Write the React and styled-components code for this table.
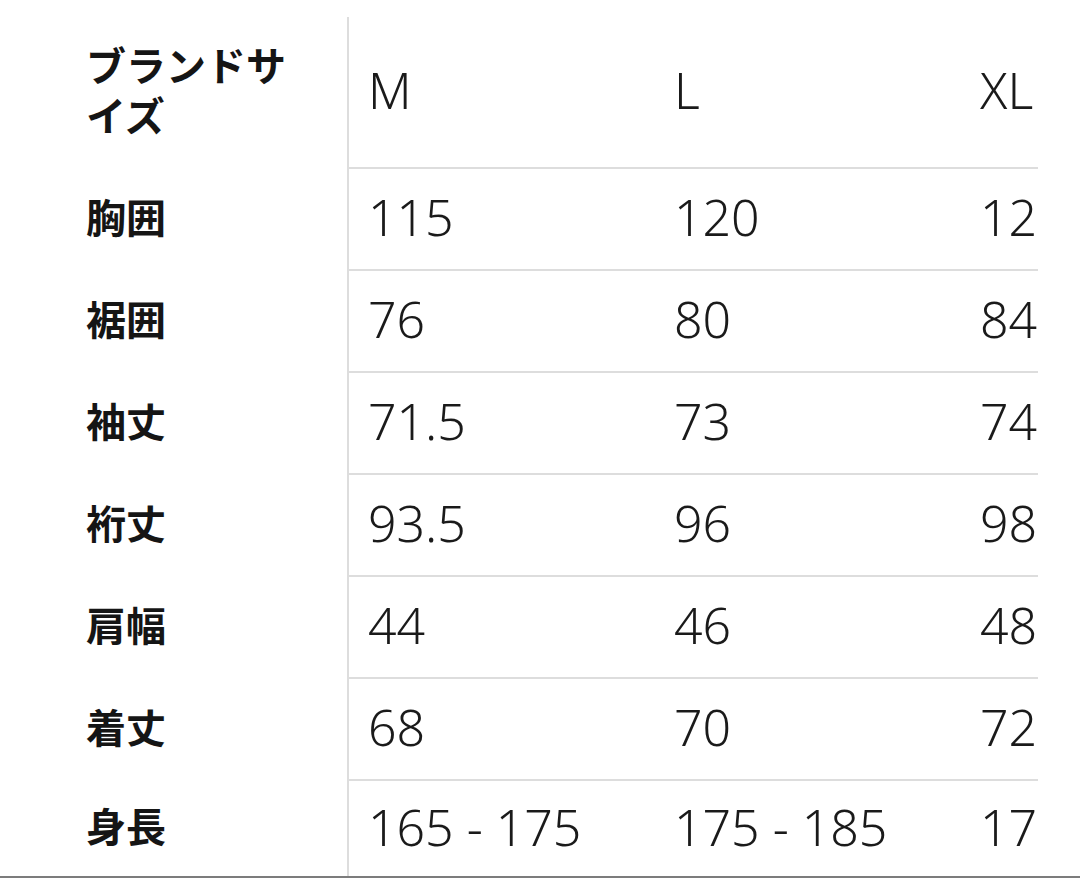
import React from 'react';
import styled, { createGlobalStyle } from 'styled-components';

const sizes = ['M', 'L', 'XL'];

const rows = [
  { label: '胸囲', values: ['115', '120', '125'] },
  { label: '裾囲', values: ['76', '80', '84'] },
  { label: '袖丈', values: ['71.5', '73', '74.5'] },
  { label: '裄丈', values: ['93.5', '96', '98.5'] },
  { label: '肩幅', values: ['44', '46', '48'] },
  { label: '着丈', values: ['68', '70', '72'] },
  { label: '身長', values: ['165 - 175', '175 - 185', '175 - 185'] },
];

function App() {
  return (
    <>
      <GlobalStyle />
      <Page>
        <Table>
          <Row head>
            <LabelCell>ブランドサイズ</LabelCell>
            {sizes.map((s) => (
              <ValueCell key={s}>{s}</ValueCell>
            ))}
          </Row>
          {rows.map((row, i) => (
            <Row key={row.label} last={i === rows.length - 1}>
              <LabelCell>{row.label}</LabelCell>
              {row.values.map((v, j) => (
                <ValueCell key={j}>{v}</ValueCell>
              ))}
            </Row>
          ))}
        </Table>
      </Page>
    </>
  );
}

const GlobalStyle = createGlobalStyle`
  body {
    margin: 0;
    background: #fff;
    font-family: "Noto Sans", "Noto Sans CJK JP", sans-serif;
  }
`;

const Page = styled.div`
  height: 878px;
  box-sizing: border-box;
  padding-top: 17px;
  border-bottom: 2px solid #7c7c7c;
  overflow: hidden;
`;

// scrolling table, third column is cut off at the right edge
const Table = styled.div`
  width: 1038px;
  overflow: hidden;
`;

const Row = styled.div`
  display: grid;
  grid-template-columns: 349px repeat(3, 306px);
  height: ${({ head, last }) => (head ? '152px' : last ? '96px' : '102px')};

  & > div:not(:first-child) {
    border-bottom: ${({ last }) => (last ? 'none' : '2px solid #dddddd')};
  }
`;

const LabelCell = styled.div`
  display: flex;
  align-items: center;
  box-sizing: border-box;
  padding: 0 44px 9px 86px;
  border-right: 2px solid #dddddd;
  font-family: "Noto Sans CJK JP", sans-serif;
  font-weight: 700;
  font-size: 40px;
  line-height: 50px;
  color: #151515;
`;

const ValueCell = styled.div`
  display: flex;
  align-items: center;
  box-sizing: border-box;
  padding: 0 0 4px 19px;
  font-family: "Noto Sans", sans-serif;
  font-weight: 300;
  font-size: 50px;
  color: #1a1a1a;
  white-space: nowrap;
`;

export default App;
